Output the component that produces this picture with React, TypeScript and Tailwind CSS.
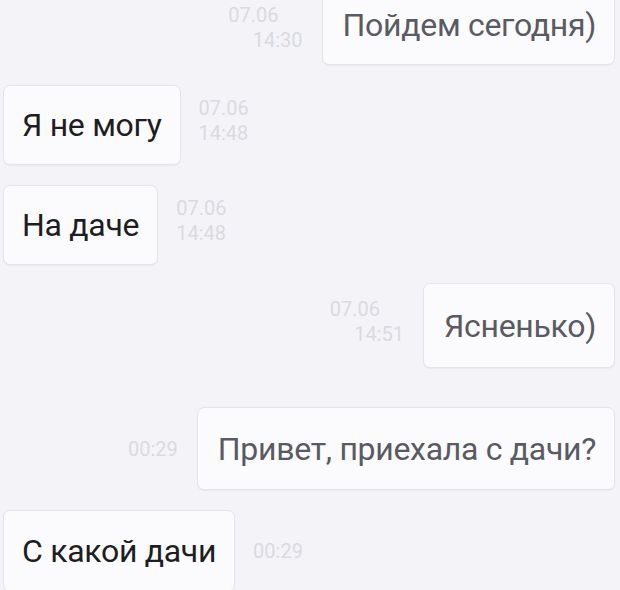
import React from 'react'

type Message = {
  id: number
  text: string
  out: boolean
  date?: string
  time: string
  rowClass: string
}

// outgoing messages sit on the right with the time to their left,
// incoming ones on the left with the time to their right
const messages: Message[] = [
  { id: 1, text: 'Пойдем сегодня)', out: true, date: '07.06', time: '14:30', rowClass: '-mt-[15px] h-[80px]' },
  { id: 2, text: 'Я не могу', out: false, date: '07.06', time: '14:48', rowClass: 'mt-[20px] h-[80px]' },
  { id: 3, text: 'На даче', out: false, date: '07.06', time: '14:48', rowClass: 'mt-[20px] h-[80px]' },
  { id: 4, text: 'Ясненько)', out: true, date: '07.06', time: '14:51', rowClass: 'mt-[18px] h-[85px]' },
  { id: 5, text: 'Привет, приехала с дачи?', out: true, time: '00:29', rowClass: 'mt-[39px] h-[83px]' },
  { id: 6, text: 'С какой дачи', out: false, time: '00:29', rowClass: 'mt-[20px] h-[82px]' },
]

function Stamp({ msg }: { msg: Message }) {
  if (!msg.date) {
    return <div className="text-[20px] leading-[26px] text-[#dadae0]">{msg.time}</div>
  }
  return (
    <div
      className={`flex flex-col text-[20px] leading-[25px] text-[#dadae0] ${
        msg.out ? 'items-end' : 'items-start'
      } ${msg.id === 1 ? 'mt-[6px]' : '-mt-[8px]'}`}
    >
      <span className={msg.out ? 'pr-[24px]' : ''}>{msg.date}</span>
      <span>{msg.time}</span>
    </div>
  )
}

function Bubble({ msg }: { msg: Message }) {
  return (
    <div
      className={`flex h-full items-center rounded-[7px] border border-[#e4e4ea] bg-[#fbfbfd] px-[18px] text-[32px] tracking-[-0.3px] shadow-[0_1px_1px_rgba(0,0,0,0.04)] ${
        msg.out ? 'pl-[20px] text-[#5a5a62]' : 'text-[#1e1e22]'
      }`}
    >
      {msg.text}
    </div>
  )
}

export default function App() {
  return (
    <div className="h-[590px] w-[620px] overflow-hidden bg-[#f4f4f8] font-['Roboto',sans-serif]">
      <div className="flex flex-col">
        {messages.map((msg) => (
          <div
            key={msg.id}
            className={`flex items-center ${msg.rowClass} ${msg.out ? 'justify-end pr-[5px]' : 'justify-start pl-[3px]'}`}
          >
            {msg.out ? (
              <>
                <div className="mr-[19px]">
                  <Stamp msg={msg} />
                </div>
                <Bubble msg={msg} />
              </>
            ) : (
              <>
                <Bubble msg={msg} />
                <div className="ml-[18px]">
                  <Stamp msg={msg} />
                </div>
              </>
            )}
          </div>
        ))}
      </div>
    </div>
  )
}
